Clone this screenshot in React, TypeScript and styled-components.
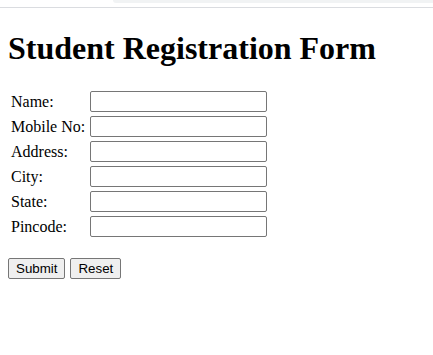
import React from 'react';
import styled, { createGlobalStyle } from 'styled-components';

const GlobalStyle = createGlobalStyle`
  body {
    margin: 0;
    background: #ffffff;
    font-family: "Liberation Serif", "Times New Roman", serif;
    color: #000000;
  }
`;

const TopStrip = styled.div`
  height: 7px;
  border-bottom: 1px solid #dadce0;
  display: flex;
  justify-content: flex-end;
`;

const TabEdge = styled.div`
  width: 320px;
  height: 3px;
  background: #f1f3f4;
  border-bottom-left-radius: 6px;
`;

const Main = styled.main`
  padding: 0 8px;
`;

const Title = styled.h1`
  font-size: 32px;
  font-weight: bold;
  margin: 22px 0 21px;
`;

const FieldGrid = styled.div`
  display: grid;
  grid-template-columns: auto auto;
  justify-content: start;
  align-items: center;
  column-gap: 5px;
  row-gap: 4px;
  padding: 3px;
`;

const Label = styled.label`
  font-size: 16px;
`;

const TextInput = styled.input`
  box-sizing: border-box;
  width: 177px;
  height: 21px;
  padding: 1px 2px;
  border: 1px solid #767676;
  border-radius: 2px;
  font-family: "Liberation Sans", Arial, sans-serif;
  font-size: 13.33px;
`;

const Actions = styled.div`
  display: flex;
  gap: 5px;
  margin-top: 18px;
`;

const Button = styled.button`
  box-sizing: border-box;
  height: 21px;
  padding: 1px 7px;
  border: 1px solid #767676;
  border-radius: 2px;
  background: #efefef;
  font-family: "Liberation Sans", Arial, sans-serif;
  font-size: 13.33px;
  color: #000000;
`;

const fields = ['Name:', 'Mobile No:', 'Address:', 'City:', 'State:', 'Pincode:'];

const App: React.FC = () => {
  return (
    <>
      <GlobalStyle />
      <TopStrip>
        <TabEdge />
      </TopStrip>
      <Main>
        <Title>Student Registration Form</Title>
        <form>
          <FieldGrid>
            {fields.map((f) => (
              <React.Fragment key={f}>
                <Label>{f}</Label>
                <TextInput type="text" />
              </React.Fragment>
            ))}
          </FieldGrid>
          <Actions>
            <Button type="submit">Submit</Button>
            <Button type="reset">Reset</Button>
          </Actions>
        </form>
      </Main>
    </>
  );
};

export default App;
